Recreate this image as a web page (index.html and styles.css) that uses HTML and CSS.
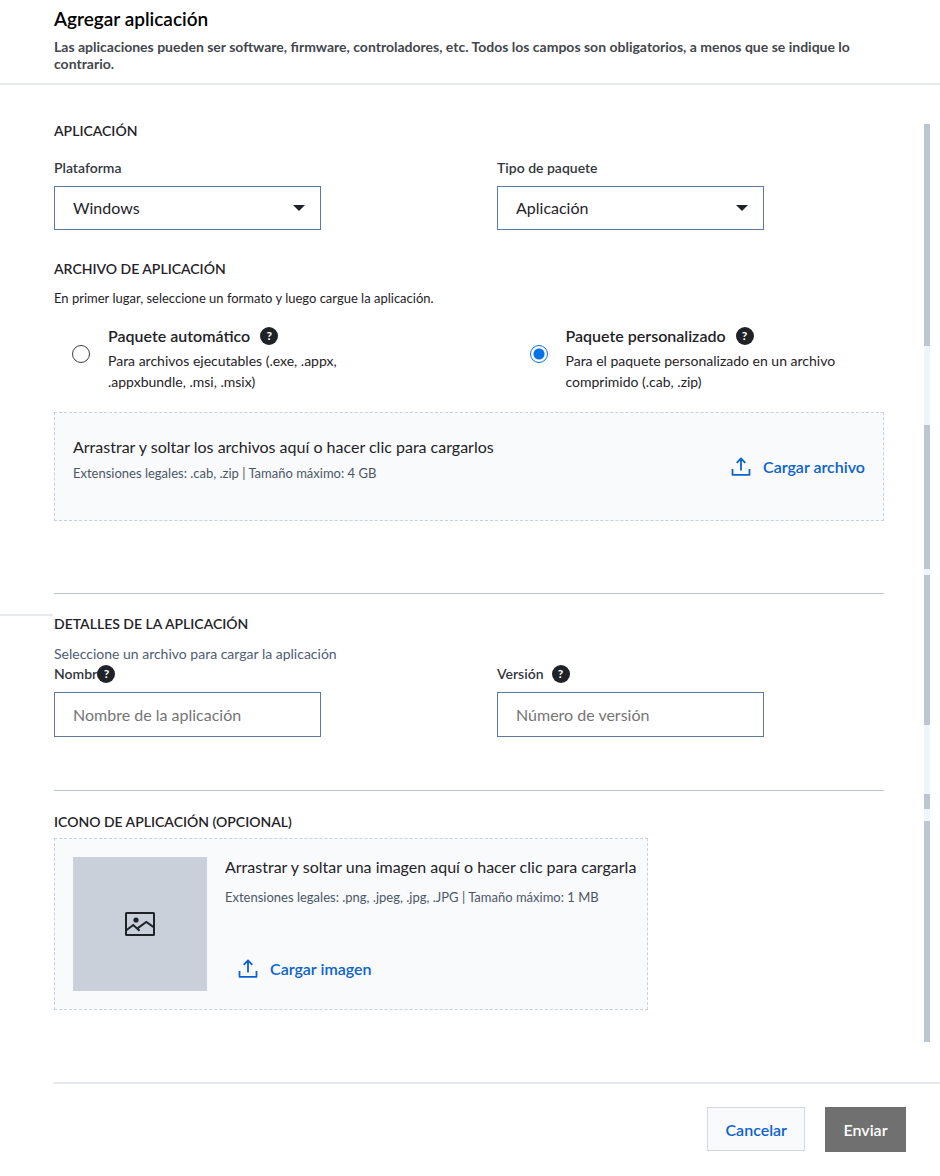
FILE: index.html
```html
<!DOCTYPE html>
<html lang="es">
<head>
<meta charset="UTF-8">
<meta name="viewport" content="width=device-width, initial-scale=1.0">
<title>Agregar aplicación</title>
<link rel="stylesheet" href="styles.css">
</head>
<body>

<header class="page-header">
  <h1>Agregar aplicación</h1>
  <p>Las aplicaciones pueden ser software, firmware, controladores, etc. Todos los campos son obligatorios, a menos que se indique lo contrario.</p>
</header>

<main class="page-main">
  <div class="side-line"></div>

  <form class="app-form" id="app-form">
    <section class="section">
      <h2>APLICACIÓN</h2>
      <div class="fields">
        <div class="field">
          <div class="label-row"><label for="platform">Plataforma</label></div>
          <select id="platform">
            <option>Windows</option>
          </select>
        </div>
        <div class="field">
          <div class="label-row"><label for="package-type">Tipo de paquete</label></div>
          <select id="package-type">
            <option>Aplicación</option>
          </select>
        </div>
      </div>
    </section>

    <section class="section section-file">
      <h2>ARCHIVO DE APLICACIÓN</h2>
      <p class="intro">En primer lugar, seleccione un formato y luego cargue la aplicación.</p>
      <div class="formats">
        <div class="format">
          <input type="radio" name="format" id="format-auto">
          <div class="format-text">
            <div class="format-title">
              <label for="format-auto">Paquete automático</label>
              <button type="button" class="help">?</button>
            </div>
            <p>Para archivos ejecutables (.exe, .appx, .appxbundle, .msi, .msix)</p>
          </div>
        </div>
        <div class="format">
          <input type="radio" name="format" id="format-custom" checked>
          <div class="format-text">
            <div class="format-title">
              <label for="format-custom">Paquete personalizado</label>
              <button type="button" class="help">?</button>
            </div>
            <p>Para el paquete personalizado en un archivo comprimido (.cab, .zip)</p>
          </div>
        </div>
      </div>
      <div class="drop drop-file">
        <div>
          <p class="drop-title">Arrastrar y soltar los archivos aquí o hacer clic para cargarlos</p>
          <p class="drop-hint">Extensiones legales: .cab, .zip | Tamaño máximo: 4 GB</p>
        </div>
        <button type="button" class="upload">
          <svg width="20" height="20" viewBox="0 0 20 20" fill="none" stroke="currentColor" stroke-width="1.8" stroke-linejoin="round">
            <path d="M1.5 12v5.8h17V12M10 13.5V2M5.7 5.8 10 1.5l4.3 4.3"/>
          </svg>
          Cargar archivo
        </button>
      </div>
    </section>

    <section class="section section-details">
      <h2>DETALLES DE LA APLICACIÓN</h2>
      <p class="notice">Seleccione un archivo para cargar la aplicación</p>
      <div class="fields">
        <div class="field">
          <div class="label-row label-tight">
            <label for="app-name">Nombre</label>
            <button type="button" class="help">?</button>
          </div>
          <input type="text" id="app-name" placeholder="Nombre de la aplicación">
        </div>
        <div class="field">
          <div class="label-row label-gap">
            <label for="app-version">Versión</label>
            <button type="button" class="help">?</button>
          </div>
          <input type="text" id="app-version" placeholder="Número de versión">
        </div>
      </div>
    </section>

    <section class="section section-icon">
      <h2>ICONO DE APLICACIÓN (OPCIONAL)</h2>
      <div class="drop drop-image">
        <div class="preview">
          <svg width="32" height="26" viewBox="0 0 32 26" fill="none" stroke="#1f2328" stroke-width="2">
            <rect x="2" y="2" width="28" height="22" rx="0.5"/>
            <circle cx="12" cy="9" r="2.6" fill="#1f2328" stroke="none"/>
            <path d="M2 19.5 9.2 14l6.4 5.8M13.4 17.4l8.9-6.4 7.7 5.4"/>
          </svg>
        </div>
        <div class="drop-body">
          <p class="drop-title">Arrastrar y soltar una imagen aquí o hacer clic para cargarla</p>
          <p class="drop-hint">Extensiones legales: .png, .jpeg, .jpg, .JPG | Tamaño máximo: 1 MB</p>
          <button type="button" class="upload">
            <svg width="20" height="20" viewBox="0 0 20 20" fill="none" stroke="currentColor" stroke-width="1.8" stroke-linejoin="round">
              <path d="M1.5 12v5.8h17V12M10 13.5V2M5.7 5.8 10 1.5l4.3 4.3"/>
            </svg>
            Cargar imagen
          </button>
        </div>
      </div>
    </section>
  </form>

  <!-- scroll track -->
  <div class="track">
    <span style="flex-grow: 222"></span>
    <span class="light" style="flex-grow: 79"></span>
    <span style="flex-grow: 144"></span>
    <span class="light" style="flex-grow: 6"></span>
    <span style="flex-grow: 150"></span>
    <span class="light" style="flex-grow: 69"></span>
    <span style="flex-grow: 15"></span>
    <span class="light" style="flex-grow: 12"></span>
    <span style="flex-grow: 221"></span>
  </div>
</main>

<footer class="page-footer">
  <button type="button" class="btn btn-cancel">Cancelar</button>
  <button type="submit" form="app-form" class="btn btn-send" disabled>Enviar</button>
</footer>

</body>
</html>
```
FILE: styles.css
```css
* {
  box-sizing: border-box;
}
body {
  margin: 0;
  background: #fff;
  color: #1f2328;
  font-family: Lato, sans-serif;
  font-size: 14px;
  line-height: 20px;
}
h1, h2, p {
  margin: 0;
}
button, input, select {
  font-family: inherit;
}
.page-header {
  padding: 7px 54px 11px;
  border-bottom: 2px solid #e6eaef;
}
.page-header h1 {
  margin-bottom: 7px;
  color: #000;
  font-size: 19px;
  font-weight: 600;
  line-height: 24px;
}
.page-header p {
  color: #43474d;
  font-weight: 700;
  line-height: 17px;
}
.page-main {
  display: flex;
}
.side-line {
  width: 53px;
  height: 531px;
  margin-right: 1px;
  border-bottom: 2px solid #e6eaef;
}
.app-form {
  flex: 1;
  padding: 36px 0 72px;
}
.section h2 {
  font-size: 14px;
  font-weight: 600;
  line-height: 20px;
}
.fields {
  display: grid;
  grid-template-columns: 1fr 1fr;
  column-gap: 56px;
}
.section:first-child .fields {
  margin-top: 17px;
}
.label-row {
  display: flex;
  align-items: center;
  height: 20px;
  margin-bottom: 8px;
  color: #33373d;
  font-weight: 600;
}
.label-gap {
  gap: 8px;
}
.label-tight .help {
  margin-left: -7px;
}
.field select,
.field input {
  display: block;
  width: 267px;
  max-width: 100%;
  height: 44px;
  padding: 0 18px;
  border: 1px solid #5f7b9c;
  border-radius: 0;
  background: #fff;
  color: #1f2328;
  font-size: 16px;
}
.field input {
  height: 45px;
}
.field input::placeholder {
  color: #757575;
}
.field select {
  appearance: none;
  padding-bottom: 2px;
  background: #fff url("data:image/svg+xml,%3Csvg xmlns='http://www.w3.org/2000/svg' width='12' height='6'%3E%3Cpath d='M0 0h12L6 6z' fill='%231f2328'/%3E%3C/svg%3E") no-repeat right 15px center;
}
.section-file {
  margin-top: 29px;
}
.intro {
  margin-top: 9px;
  font-size: 13px;
}
.formats {
  display: grid;
  grid-template-columns: 1fr 1fr;
  column-gap: 103px;
  margin: 15px 0 20px;
  padding-left: 18px;
}
.format {
  display: flex;
  align-items: flex-start;
  gap: 18px;
}
.format input {
  flex: none;
  appearance: none;
  width: 18px;
  height: 18px;
  margin: 22px 0 0;
  border: 1px solid #3a4048;
  border-radius: 50%;
}
.format input:checked {
  border-color: #0672e5;
  background: radial-gradient(circle, #0672e5 5px, #fff 6px);
}
.format-title {
  display: flex;
  align-items: center;
  gap: 10px;
  height: 26px;
  margin-bottom: 1px;
  font-size: 16px;
  font-weight: 600;
}
.format p {
  max-width: 300px;
  line-height: 21px;
}
.help {
  width: 18px;
  height: 18px;
  padding: 0;
  border: none;
  border-radius: 50%;
  background: #1f2328;
  color: #fff;
  font-size: 12px;
  font-weight: 700;
  line-height: 18px;
}
.drop {
  display: flex;
  padding: 18px;
  border: 1px dashed #c9d1db;
  background: #f8fafc;
}
.drop-title {
  font-size: 16px;
  line-height: 20px;
}
.drop-hint {
  color: #4c5766;
  font-size: 13px;
}
.upload {
  display: flex;
  align-items: center;
  gap: 12px;
  padding: 0;
  border: none;
  background: none;
  color: #0d62cc;
  font-size: 16px;
  font-weight: 600;
  line-height: 24px;
}
.drop-file {
  align-items: center;
  justify-content: space-between;
  height: 109px;
}
.drop-file .drop-title {
  margin-bottom: 6px;
}
.drop-file > div {
  padding-bottom: 14px;
}
.section-details {
  margin-top: 72px;
  padding: 20px 0 53px;
  border-top: 1px solid #bcc5d2;
  border-bottom: 1px solid #bcc5d2;
}
.notice {
  margin-top: 10px;
  color: #4d5d73;
}
.section-icon {
  padding-top: 21px;
}
.drop-image {
  width: fit-content;
  gap: 18px;
  margin-top: 6px;
  padding-right: 11px;
}
.preview {
  display: flex;
  align-items: center;
  justify-content: center;
  width: 134px;
  height: 134px;
  background: #c9d0da;
}
.drop-body .drop-hint {
  margin-top: 10px;
}
.drop-body .upload {
  margin: 50px 0 0 13px;
}
.track {
  display: flex;
  flex-direction: column;
  width: 6px;
  margin: 39px 10px 40px 40px;
}
.track span {
  background: #bcc5d2;
}
.track .light {
  background: #eff6fa;
}
.page-footer {
  display: flex;
  justify-content: flex-end;
  gap: 20px;
  margin-left: 53px;
  padding: 23px 34px 24px;
  border-top: 2px solid #e6eaef;
}
.btn {
  min-width: 81px;
  height: 45px;
  padding: 0 18px;
  border: none;
  color: #fff;
  background: #707070;
  font-size: 16px;
  font-weight: 600;
}
.btn-cancel {
  height: 44px;
  padding: 0 17px;
  border: 1px solid #d0d9e3;
  background: #f8fafc;
  color: #0d62cc;
}
```
